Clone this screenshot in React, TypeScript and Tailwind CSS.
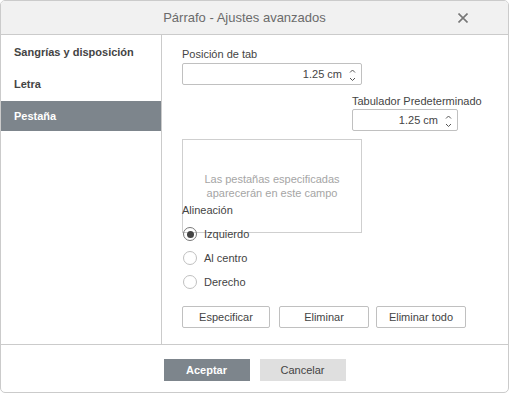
import React from 'react';

const font = "font-['Liberation_Sans',Arial,sans-serif]";

function Spinner() {
  return (
    <svg
      className="absolute right-[5px] top-[4px]"
      width="7"
      height="14"
      viewBox="0 0 7 14"
      fill="none"
      stroke="#555"
      strokeWidth="1"
    >
      <path d="M1 4.5 L3.5 2 L6 4.5" />
      <path d="M1 10 L3.5 12.5 L6 10" />
    </svg>
  );
}

function NumberInput({ value, width }: { value: string; width: string }) {
  return (
    <div
      className={`relative flex h-[22px] items-center justify-end rounded-[2px] border border-[#c0c0c0] bg-white pr-[19px] text-[11px] text-[#444] ${width}`}
    >
      {value}
      <Spinner />
    </div>
  );
}

function Radio({ label, checked }: { label: string; checked?: boolean }) {
  return (
    <div className="flex h-[24px] items-center">
      <span
        className={`ml-[1px] flex h-[14px] w-[14px] items-center justify-center rounded-full border ${
          checked ? 'border-[#777]' : 'border-[#c0c0c0]'
        }`}
      >
        {checked && <span className="h-[7px] w-[7px] rounded-full bg-[#444]" />}
      </span>
      <span className="ml-[7px] text-[11px] text-[#444]">{label}</span>
    </div>
  );
}

export default function App() {
  const tabs = ['Sangrías y disposición', 'Letra', 'Pestaña'];

  return (
    <div className={`h-[394px] w-[509px] bg-white ${font}`}>
      <div className="flex h-[393px] w-[509px] flex-col overflow-hidden rounded-[5px] border border-[#cbcbcb]">
        {/* header */}
        <div className="relative flex h-[34px] shrink-0 items-center justify-center border-b border-[#cbcbcb] bg-[#f1f1f1] pr-[20px]">
          <span className="text-[13px] text-[#6b6b6b]">Párrafo - Ajustes avanzados</span>
          <svg
            className="absolute right-[40px] top-[12px]"
            width="10"
            height="10"
            viewBox="0 0 10 10"
            stroke="#777"
            strokeWidth="1.6"
          >
            <path d="M0.5 0.5 L9.5 9.5 M9.5 0.5 L0.5 9.5" />
          </svg>
        </div>

        <div className="flex flex-1">
          {/* sidebar */}
          <div className="flex w-[161px] shrink-0 flex-col gap-[2px] border-r border-[#cbcbcb] pt-[2px]">
            {tabs.map((t) => (
              <div
                key={t}
                className={`flex h-[30px] items-center px-[13px] text-[11px] font-bold ${
                  t === 'Pestaña' ? 'bg-[#7d858c] text-white' : 'text-[#444]'
                }`}
              >
                {t}
              </div>
            ))}
          </div>

          {/* content */}
          <div className="flex-1 pl-[20px] pt-[13px] text-[#444]">
            <div className="mb-[2px] h-[13px] text-[11px] leading-[13px]">Posición de tab</div>
            <NumberInput value="1.25 cm" width="w-[180px]" />

            <div className="ml-[170px] mt-[10px]">
              <div className="mb-[1px] h-[13px] text-[11px] leading-[13px]">Tabulador Predeterminado</div>
              <NumberInput value="1.25 cm" width="w-[106px]" />
            </div>

            <div className="mt-[8px] flex h-[94px] w-[180px] flex-col items-center justify-center border border-[#cfcfcf] text-center text-[11px] leading-[14px] text-[#a5a5a5]">
              <span>Las pestañas especificadas</span>
              <span>aparecerán en este campo</span>
            </div>

            <div className="relative mt-[-29px] h-[13px] text-[11px] leading-[13px]">Alineación</div>
            <div className="mt-[5px]">
              <Radio label="Izquierdo" checked />
              <Radio label="Al centro" />
              <Radio label="Derecho" />
            </div>

            <div className="mt-[12px] flex">
              <button className="h-[22px] w-[88px] rounded-[2px] border border-[#c0c0c0] bg-white text-[11px] text-[#444]">
                Especificar
              </button>
              <button className="ml-[9px] h-[22px] w-[90px] rounded-[2px] border border-[#c0c0c0] bg-white text-[11px] text-[#444]">
                Eliminar
              </button>
              <button className="ml-[7px] h-[22px] w-[90px] rounded-[2px] border border-[#c0c0c0] bg-white text-[11px] text-[#444]">
                Eliminar todo
              </button>
            </div>
          </div>
        </div>

        {/* footer */}
        <div className="flex h-[48px] shrink-0 justify-center gap-[10px] border-t border-[#cbcbcb] pt-[14px]">
          <button className="h-[22px] w-[86px] bg-[#7d858c] text-[11px] font-bold text-white">Aceptar</button>
          <button className="h-[22px] w-[86px] bg-[#dfdfdf] text-[11px] text-[#444]">Cancelar</button>
        </div>
      </div>
    </div>
  );
}
